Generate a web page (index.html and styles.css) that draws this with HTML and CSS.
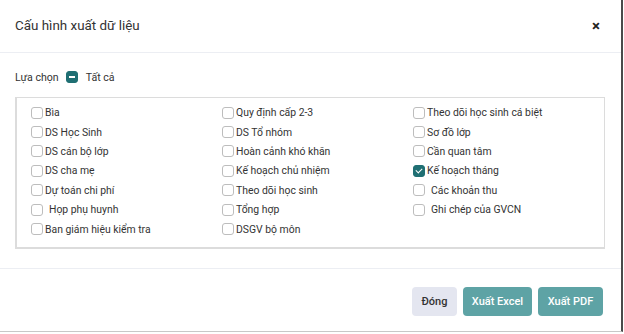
FILE: index.html
```html
<!DOCTYPE html>
<html lang="vi">
<head>
  <meta charset="UTF-8">
  <title>Cấu hình xuất dữ liệu</title>
  <link rel="stylesheet" href="styles.css">
</head>
<body>
  <div class="modal">
    <div class="modal-header">
      <span class="title">Cấu hình xuất dữ liệu</span>
      <span class="close">&times;</span>
    </div>

    <div class="modal-body">
      <div class="select-all">
        <span>Lựa chọn</span>
        <span class="box indeterminate"></span>
        <span>Tất cả</span>
      </div>

      <div class="options">
        <label class="opt"><span class="box"></span>Bìa</label>
        <label class="opt"><span class="box"></span>Quy định cấp 2-3</label>
        <label class="opt"><span class="box"></span>Theo dõi học sinh cá biệt</label>

        <label class="opt"><span class="box"></span>DS Học Sinh</label>
        <label class="opt"><span class="box"></span>DS Tổ nhóm</label>
        <label class="opt"><span class="box"></span>Sơ đồ lớp</label>

        <label class="opt"><span class="box"></span>DS cán bộ lớp</label>
        <label class="opt"><span class="box"></span>Hoàn cảnh khó khăn</label>
        <label class="opt"><span class="box"></span>Cần quan tâm</label>

        <label class="opt"><span class="box"></span>DS cha mẹ</label>
        <label class="opt"><span class="box"></span>Kế hoạch chủ nhiệm</label>
        <label class="opt"><span class="box checked"></span>Kế hoạch tháng</label>

        <label class="opt"><span class="box"></span>Dự toán chi phí</label>
        <label class="opt"><span class="box"></span>Theo dõi học sinh</label>
        <label class="opt spaced"><span class="box"></span>Các khoản thu</label>

        <label class="opt spaced"><span class="box"></span>Họp phụ huynh</label>
        <label class="opt"><span class="box"></span>Tổng hợp</label>
        <label class="opt spaced"><span class="box"></span>Ghi chép của GVCN</label>

        <label class="opt"><span class="box"></span>Ban giám hiệu kiểm tra</label>
        <label class="opt"><span class="box"></span>DSGV bộ môn</label>
      </div>
    </div>

    <div class="modal-footer">
      <button class="btn btn-light">Đóng</button>
      <button class="btn btn-teal btn-excel">Xuất Excel</button>
      <button class="btn btn-teal btn-pdf">Xuất PDF</button>
    </div>
  </div>
</body>
</html>
```

FILE: styles.css
```css
body {
  margin: 0;
  background: #fff;
  font-family: 'Roboto', 'Liberation Sans', sans-serif;
  color: #333;
}
.modal {
  width: 621px;
  height: 331px;
  background: #fff;
  border-right: 2px solid #4a4a4a;
  border-bottom: 1px solid #c8c8c8;
}
.modal-header {
  height: 52px;
  border-bottom: 1px solid #eceef3;
  display: flex;
  align-items: center;
  justify-content: space-between;
  padding: 0 21px 0 15px;
}
.title {
  font-size: 13.4px;
  color: #333;
  margin-top: -2px;
}
.close {
  font-size: 15px;
  font-weight: bold;
  color: #222;
}
.modal-body {
  padding: 16px 0 19px 15px;
  border-bottom: 1px solid #eceef3;
}
.select-all {
  display: flex;
  align-items: center;
  font-size: 10.6px;
  height: 16px;
  margin-bottom: 12px;
}
.select-all .box {
  margin: 0 8px 0 7px;
}
.box {
  width: 10px;
  height: 10px;
  border: 1px solid #bdbdbd;
  border-radius: 3px;
  display: inline-block;
  position: relative;
  flex: none;
}
.box.indeterminate {
  background: #1f6f73;
  border-color: #1f6f73;
}
.box.indeterminate::after {
  content: '';
  position: absolute;
  left: 2px;
  top: 4px;
  width: 6px;
  height: 2px;
  background: #fff;
}
.box.checked {
  background: #1f6f73;
  border-color: #1f6f73;
}
.box.checked::after {
  content: '';
  position: absolute;
  left: 3px;
  top: 1px;
  width: 3px;
  height: 5px;
  border: solid #fff;
  border-width: 0 1.5px 1.5px 0;
  transform: rotate(45deg);
}
.options {
  width: 590px;
  height: 152px;
  box-sizing: border-box;
  border: 1px solid #dcdcdc;
  border-left-width: 2px;
  border-bottom-width: 2px;
  padding: 5px 0 0 14px;
  display: grid;
  grid-template-columns: repeat(3, 191px);
  grid-auto-rows: 19.4px;
}
.opt {
  display: flex;
  align-items: center;
  font-size: 10.4px;
  color: #333;
  gap: 2px;
}
.opt.spaced .box {
  margin-right: 4px;
}
.modal-footer {
  display: flex;
  justify-content: flex-end;
  gap: 6px;
  padding: 18px 18px 0 0;
}
.btn {
  height: 29px;
  border: none;
  border-radius: 4px;
  font-family: inherit;
  font-size: 11px;
  font-weight: 500;
  padding: 0;
}
.btn-light {
  background: #e4e6f0;
  color: #333;
  width: 45px;
}
.btn-teal {
  background: #5ea3a5;
  color: #fff;
}
.btn-excel {
  width: 69px;
}
.btn-pdf {
  width: 65px;
}
```
